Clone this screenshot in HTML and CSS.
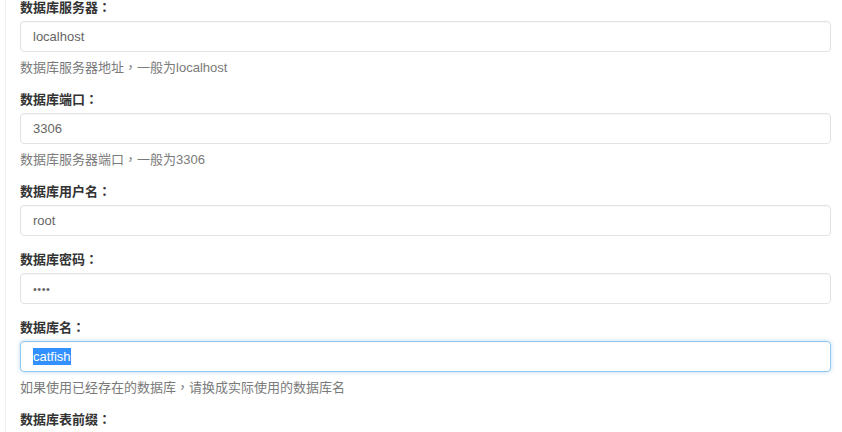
FILE: index.html
```html
<!DOCTYPE html>
<html lang="zh-CN">
<head>
<meta charset="utf-8">
<title>数据库设置</title>
<link rel="stylesheet" href="styles.css">
</head>
<body>
<div class="panel">
  <form class="db-form">
    <div class="form-group">
      <label class="control-label">数据库服务器<span class="punct" lang="zh-TW">：</span></label>
      <input class="form-control" type="text" value="localhost">
      <p class="help-block">数据库服务器地址<span class="punct" lang="zh-TW">，</span>一般为localhost</p>
    </div>
    <div class="form-group">
      <label class="control-label">数据库端口<span class="punct" lang="zh-TW">：</span></label>
      <input class="form-control" type="text" value="3306">
      <p class="help-block">数据库服务器端口<span class="punct" lang="zh-TW">，</span>一般为3306</p>
    </div>
    <div class="form-group">
      <label class="control-label">数据库用户名<span class="punct" lang="zh-TW">：</span></label>
      <input class="form-control" type="text" value="root">
    </div>
    <div class="form-group">
      <label class="control-label">数据库密码<span class="punct" lang="zh-TW">：</span></label>
      <input class="form-control pwd" type="password" value="root">
    </div>
    <div class="form-group">
      <label class="control-label">数据库名<span class="punct" lang="zh-TW">：</span></label>
      <div class="form-control is-focused"><span class="selected">catfish</span></div>
      <p class="help-block">如果使用已经存在的数据库<span class="punct" lang="zh-TW">，</span>请换成实际使用的数据库名</p>
    </div>
    <div class="form-group">
      <label class="control-label">数据库表前缀<span class="punct" lang="zh-TW">：</span></label>
      <input class="form-control" type="text" value="catfish_">
    </div>
  </form>
</div>
</body>
</html>
```
FILE: styles.css
```css
html, body {
  margin: 0;
  padding: 0;
  background: #fff;
  overflow: hidden;
}
body {
  font-family: "Liberation Sans", Arial, "Noto Sans CJK SC", sans-serif;
  font-size: 13px;
  color: #333;
}
.punct {
  font-family: "Noto Sans CJK TC", sans-serif;
  line-height: 1;
}
.panel {
  margin-left: 5px;
  border-left: 1px solid #f0f0f0;
  padding: 0 11px 0 14px;
  min-height: 432px;
}
.db-form {
  margin: 0;
}
.form-group {
  margin-bottom: 16px;
}
.control-label {
  display: block;
  height: 16px;
  font-weight: bold;
  line-height: 16px;
  margin-bottom: 5px;
  color: #333;
}
.form-control {
  display: block;
  box-sizing: border-box;
  width: 100%;
  height: 31px;
  margin: 0;
  padding: 0 12px;
  font-family: inherit;
  font-size: 13px;
  line-height: 29px;
  color: #666;
  background: #fff;
  border: 1px solid #e2e2e2;
  border-radius: 4px;
  box-shadow: inset 0 1px 1px rgba(0, 0, 0, 0.03);
  outline: none;
}
.pwd {
  font-size: 11px;
  letter-spacing: 0.5px;
}
.is-focused {
  border-color: #94c9ef;
  box-shadow: inset 0 1px 1px rgba(0, 0, 0, 0.03), 0 0 4px rgba(102, 175, 233, 0.45);
}
.selected {
  background: #3390ff;
  color: #fff;
  padding: 1px 0;
}
.help-block {
  height: 16px;
  margin: 8px 0 0;
  line-height: 16px;
  color: #7a7a7a;
}
```
